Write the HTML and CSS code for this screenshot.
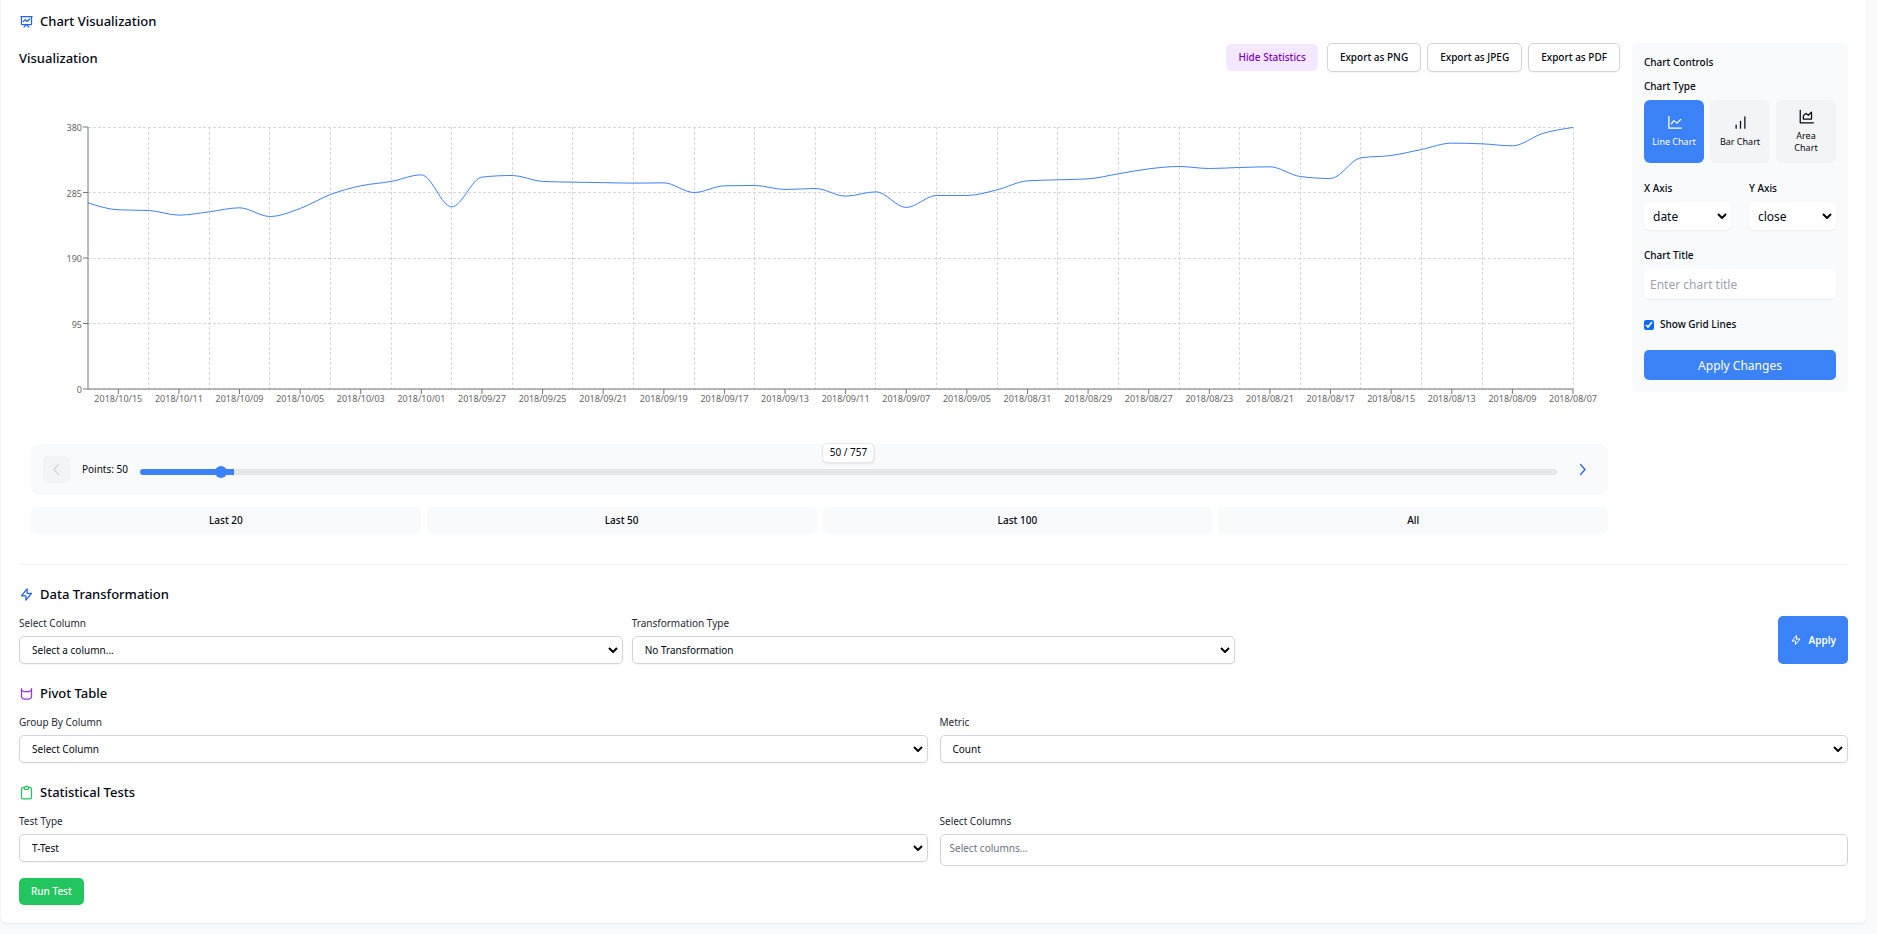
FILE: index.html
```html
<!DOCTYPE html>
<html lang="en">
<head>
<meta charset="utf-8">
<title>Chart Visualization</title>
<link rel="stylesheet" href="styles.css">
</head>
<body>
<main class="card">
  <h2 class="section-title">
    <svg class="icon icon-blue" viewBox="0 0 24 24"><path d="M7 12l3-3 3 3 4-4M8 21l4-4 4 4M3 4h18M4 4h16v12a1 1 0 01-1 1H5a1 1 0 01-1-1V4z"/></svg>
    Chart Visualization
  </h2>

  <div class="workspace">
    <section class="visual">
      <header class="visual-head">
        <h3 class="visual-title">Visualization</h3>
        <div class="actions">
          <button class="btn btn-stats" type="button">Hide Statistics</button>
          <button class="btn btn-outline" type="button">Export as PNG</button>
          <button class="btn btn-outline" type="button">Export as JPEG</button>
          <button class="btn btn-outline" type="button">Export as PDF</button>
        </div>
      </header>
      <div class="chart-box">
        <svg class="chart" id="chart" role="img" aria-label="Close by date"></svg>
        <div class="range-bar">
          <button class="nav-btn nav-off" type="button" aria-label="Previous" disabled><svg class="chevron" viewBox="0 0 24 24"><path d="M15 20l-7-8 7-8"/></svg></button>
          <label class="points" for="points">Points: 50</label>
          <div class="slider-wrap">
            <input class="slider" id="points" type="range" min="10" max="757" value="50">
            <span class="badge">50 / 757</span>
          </div>
          <button class="nav-btn" type="button" aria-label="Next"><svg class="chevron" viewBox="0 0 24 24"><path d="M9 4l7 8-7 8"/></svg></button>
        </div>
        <div class="presets">
          <button class="preset" type="button">Last 20</button>
          <button class="preset" type="button">Last 50</button>
          <button class="preset" type="button">Last 100</button>
          <button class="preset" type="button">All</button>
        </div>
      </div>
    </section>

    <aside class="controls">
      <h4 class="controls-title">Chart Controls</h4>
      <div class="controls-label">Chart Type</div>
      <div class="types">
        <button class="type type-on" type="button"><svg class="type-icon" viewBox="0 0 24 24"><path d="M3 2v19h20M7 14l4-5 5 4 6-6"/></svg>Line Chart</button>
        <button class="type" type="button"><svg class="type-icon" viewBox="0 0 24 24"><path d="M5 21v-5M12 21v-11M19 21V3"/></svg>Bar Chart</button>
        <button class="type" type="button"><svg class="type-icon" viewBox="0 0 24 24"><path d="M2 2v20h21M7 16v-5l4-4 4 3 5-5v11z"/></svg>Area Chart</button>
      </div>
      <div class="axes">
        <div class="control-field">
          <label class="controls-label" for="x-axis">X Axis</label>
          <select class="plain plain-select" id="x-axis"><option>date</option></select>
        </div>
        <div class="control-field">
          <label class="controls-label" for="y-axis">Y Axis</label>
          <select class="plain plain-select" id="y-axis"><option>close</option></select>
        </div>
      </div>
      <div class="control-field control-title">
        <label class="controls-label" for="chart-title">Chart Title</label>
        <input class="plain plain-text" id="chart-title" type="text" placeholder="Enter chart title">
      </div>
      <label class="check"><input class="check-box" type="checkbox" checked>Show Grid Lines</label>
      <button class="apply-wide" type="button">Apply Changes</button>
    </aside>
  </div>

  <hr class="divider">

  <section class="section">
    <h2 class="section-title">
      <svg class="icon icon-blue" viewBox="0 0 24 24"><path d="M13 10V3L4 14h7v7l9-11h-7z"/></svg>
      Data Transformation
    </h2>
    <div class="grid grid-3">
      <div class="field">
        <label class="label" for="column">Select Column</label>
        <select class="select" id="column"><option>Select a column...</option></select>
      </div>
      <div class="field">
        <label class="label" for="transform">Transformation Type</label>
        <select class="select" id="transform"><option>No Transformation</option></select>
      </div>
      <button class="apply" type="button"><svg class="apply-icon" viewBox="0 0 24 24"><path d="M13 10V3L4 14h7v7l9-11h-7z"/></svg>Apply</button>
    </div>
  </section>

  <section class="section">
    <h2 class="section-title">
      <svg class="icon icon-purple" viewBox="0 0 24 24"><path d="M4 4v13c0 2 3 4 8 4s8-2 8-4V4M4 5c0 2 3 4 8 4s8-2 8-4"/></svg>
      Pivot Table
    </h2>
    <div class="grid grid-2">
      <div class="field">
        <label class="label" for="group-by">Group By Column</label>
        <select class="select" id="group-by"><option>Select Column</option></select>
      </div>
      <div class="field">
        <label class="label" for="metric">Metric</label>
        <select class="select" id="metric"><option>Count</option></select>
      </div>
    </div>
  </section>

  <section class="section">
    <h2 class="section-title">
      <svg class="icon icon-green" viewBox="0 0 24 24"><path d="M9 4H6a2 2 0 00-2 2v14a2 2 0 002 2h12a2 2 0 002-2V6a2 2 0 00-2-2h-3M9 4a2 2 0 002 3h2a2 2 0 002-3M9 4a2 2 0 012-2h2a2 2 0 012 2"/></svg>
      Statistical Tests
    </h2>
    <div class="grid grid-2">
      <div class="field">
        <label class="label" for="test-type">Test Type</label>
        <select class="select" id="test-type"><option>T-Test</option></select>
      </div>
      <div class="field">
        <label class="label" for="columns">Select Columns</label>
        <input class="text-input" id="columns" type="text" placeholder="Select columns...">
      </div>
    </div>
    <button class="run" type="button">Run Test</button>
  </section>
</main>
<script src="chart.js"></script>
</body>
</html>
```
FILE: styles.css
```css
*, *::before, *::after { box-sizing: border-box; }
body {
  margin: 0;
  padding: 0 11px 11px 1px;
  background: #f9fafb;
  color: #030712;
  font-family: "Noto Sans", "Open Sans", sans-serif;
  font-size: 10px;
  line-height: 15px;
}
h2, h3, h4 { margin: 0; font-weight: 500; }
button, select, input { margin: 0; font: inherit; color: inherit; }
button { border: 0; cursor: pointer; }
.card {
  padding: 11px 18px 18px;
  background: #fff;
  border-radius: 0 0 6px 6px;
  box-shadow: 0 1px 2px rgba(0, 0, 0, 0.08);
}
.section-title {
  display: flex;
  align-items: center;
  gap: 6px;
  margin-bottom: 12px;
  font-size: 13px;
  line-height: 20px;
}
.icon, .chevron, .apply-icon, .type-icon {
  fill: none;
  stroke: currentColor;
  stroke-width: 2;
  stroke-linecap: round;
  stroke-linejoin: round;
}
.icon { width: 15px; height: 15px; }
.icon-blue { color: #2563eb; }
.icon-purple { color: #9333ea; }
.icon-green { color: #22c55e; }

.workspace { display: flex; align-items: flex-start; gap: 12px; }
.visual { flex: 1; min-width: 0; }
.visual-head { display: flex; align-items: center; justify-content: space-between; }
.visual-title { font-size: 13px; line-height: 20px; }
.actions { display: flex; align-items: center; gap: 6px; }
.btn { padding: 6px 12px; border-radius: 5px; font-weight: 500; }
.btn-stats { margin-right: 3px; background: #f3e8ff; color: #7e00c4; }
.btn-outline {
  border: 1px solid #d1d5db;
  background: #fff;
  box-shadow: 0 1px 2px rgba(0, 0, 0, 0.05);
}
.chart-box { padding: 24px 12px 30px; }
.chart { display: block; width: 100%; height: 336px; margin-bottom: 12px; overflow: visible; }
.tick-text { fill: #666; font-size: 9px; }
.grid-line { stroke: #d8d8d8; stroke-dasharray: 3 2; shape-rendering: crispEdges; }
.axis-line { stroke: #777; }
.series { fill: none; stroke: #3b82f6; stroke-width: 1; }

.range-bar {
  display: flex;
  align-items: center;
  gap: 12px;
  padding: 12px;
  border-radius: 8px;
  background: #f9fafb;
}
.nav-btn {
  display: grid;
  place-items: center;
  width: 27px;
  height: 27px;
  padding: 0;
  border-radius: 5px;
  background: transparent;
  color: #2563eb;
}
.nav-off { background: #f3f4f6; color: #d1d5db; }
.chevron { width: 15px; height: 15px; }
.points { white-space: nowrap; }
.slider-wrap { position: relative; flex: 1; display: flex; padding-top: 5px; }
.slider {
  width: 100%;
  height: 6px;
  border-radius: 4px;
  appearance: none;
  background: linear-gradient(to right, #3b82f6 0 6.6%, #e5e7eb 6.6%);
}
.slider::-webkit-slider-thumb {
  width: 12px;
  height: 12px;
  border-radius: 50%;
  appearance: none;
  background: #3b82f6;
}
.badge {
  position: absolute;
  left: 50%;
  bottom: 12px;
  transform: translateX(-50%);
  padding: 1px 6px 2px;
  border: 1px solid #e5e7eb;
  border-radius: 5px;
  background: #fff;
  box-shadow: 0 1px 2px rgba(0, 0, 0, 0.08);
  white-space: nowrap;
}
.presets { display: grid; grid-template-columns: repeat(4, 1fr); gap: 6px; margin-top: 12px; }
.preset { padding: 6px; border-radius: 5px; background: #f9fafb; font-weight: 500; }

.controls { width: 216px; padding: 12px; border-radius: 6px; background: #f9fafb; }
.controls-title { margin-bottom: 9px; line-height: 15px; }
.controls-label { display: block; margin-bottom: 6px; font-weight: 500; }
.types { display: grid; grid-template-columns: repeat(3, 1fr); gap: 6px; }
.type {
  display: flex;
  flex-direction: column;
  align-items: center;
  justify-content: center;
  gap: 6px;
  height: 63px;
  padding: 0 8px;
  border-radius: 6px;
  background: #f3f4f6;
  font-size: 9px;
  line-height: 12px;
}
.type-on { background: #3b82f6; color: #fff; }
.type-icon { width: 15px; height: 15px; }
.axes { display: grid; grid-template-columns: 1fr 1fr; gap: 18px; margin-top: 18px; }
.control-field { min-width: 0; }
.control-title { margin-top: 18px; }
.plain {
  display: block;
  width: 100%;
  height: 28px;
  padding: 0 9px;
  border: 0;
  border-radius: 5px;
  background-color: #fff;
  box-shadow: 0 1px 2px rgba(0, 0, 0, 0.06);
  font-size: 12px;
}
.plain-text { height: 30px; padding: 0 6px; }
.plain::placeholder { color: #9ca3af; }
.check { display: flex; align-items: center; gap: 6px; margin-top: 18px; font-weight: 500; }
.check-box { width: 10px; height: 10px; accent-color: #0b6bf2; }
.apply-wide {
  width: 100%;
  height: 30px;
  margin-top: 18px;
  border-radius: 5px;
  background: #3b82f6;
  color: #fff;
  font-size: 12px;
}

.divider { margin: 0 0 19px; border: 0; border-top: 1px solid #f3f4f6; }
.section + .section { margin-top: 19px; }
.grid { display: grid; }
.grid-3 { grid-template-columns: repeat(3, 1fr); gap: 9px; }
.grid-2 { grid-template-columns: repeat(2, 1fr); gap: 12px; }
.label { display: block; margin-bottom: 5px; color: #1f2937; }
.select, .text-input {
  display: block;
  width: 100%;
  height: 28px;
  padding: 0 12px;
  border: 1px solid #d1d5db;
  border-radius: 5px;
  background-color: #fff;
  box-shadow: 0 1px 2px rgba(0, 0, 0, 0.05);
}
.select, .plain-select {
  appearance: none;
  background-image: url("data:image/svg+xml,%3Csvg xmlns='http://www.w3.org/2000/svg' viewBox='0 0 10 6'%3E%3Cpath d='M1 1l4 4 4-4' fill='none' stroke='%23000' stroke-width='2'/%3E%3C/svg%3E");
  background-repeat: no-repeat;
  background-position: right 4px center;
  background-size: 10px 6px;
}
.text-input { height: 32px; padding: 0 9px 4px; box-shadow: none; }
.text-input::placeholder { color: #6b7280; }
.apply {
  display: flex;
  align-items: center;
  justify-self: end;
  gap: 6px;
  padding: 0 12px;
  border-radius: 5px;
  background: #3b82f6;
  color: #fff;
  font-weight: 600;
}
.apply-icon { width: 12px; height: 12px; }
.run {
  margin-top: 12px;
  padding: 6px 12px;
  border-radius: 5px;
  background: #22c55e;
  color: #fff;
  font-weight: 500;
}
```
FILE: chart.js
```js
const values = [
  270, 259.9, 258.9, 252.2, 257, 262.8, 250.2, 261.8, 282.1, 294.7,
  301, 310.6, 264.2, 307.3, 309.7, 301, 300, 299.3, 298.6, 299,
  285, 294.7, 295.2, 289.4, 290.8, 279.7, 286, 263.3, 280.7, 280.7,
  288.9, 301.9, 303.4, 304.8, 312.1, 319.3, 322.7, 319.8, 321.3, 322.2,
  308.2, 305.3, 335.3, 338.7, 347.4, 356.6, 355.6, 352.7, 370.6, 379.3
];
const dates = [
  "10/15", "10/11", "10/09", "10/05", "10/03", "10/01", "09/27", "09/25", "09/21",
  "09/19", "09/17", "09/13", "09/11", "09/07", "09/05", "08/31", "08/29", "08/27",
  "08/23", "08/21", "08/17", "08/15", "08/13", "08/09", "08/07"
];
const margin = { left: 57, right: 35, top: 31, bottom: 293 };
const svg = document.getElementById("chart");

function add(name, attrs, text) {
  const node = document.createElementNS("http://www.w3.org/2000/svg", name);
  for (const key in attrs) node.setAttribute(key, attrs[key]);
  if (text) node.textContent = text;
  svg.appendChild(node);
}
function line(x1, y1, x2, y2, cls) {
  add("line", { x1, y1, x2, y2, class: cls });
}

// Monotone cubic interpolation through evenly spaced points.
function monotonePath(pts, step) {
  const slopes = pts.slice(1).map((p, i) => (p[1] - pts[i][1]) / step);
  const last = slopes.length;
  const tangents = pts.map((p, i) => {
    if (i === 0 || i === last) return 0;
    const a = slopes[i - 1];
    const b = slopes[i];
    const sign = Math.sign(a) + Math.sign(b);
    return sign * Math.min(Math.abs(a), Math.abs(b), Math.abs(a + b) / 4) || 0;
  });
  tangents[0] = (3 * slopes[0] - tangents[1]) / 2;
  tangents[last] = (3 * slopes[last - 1] - tangents[last - 1]) / 2;
  const third = step / 3;
  let d = `M${pts[0][0]},${pts[0][1]}`;
  for (let i = 1; i < pts.length; i++) {
    const [x0, y0] = pts[i - 1];
    const [x1, y1] = pts[i];
    d += `C${x0 + third},${y0 + third * tangents[i - 1]},${x1 - third},${y1 - third * tangents[i]},${x1},${y1}`;
  }
  return d;
}

function draw() {
  svg.replaceChildren();
  const right = svg.clientWidth - margin.right;
  const step = (right - margin.left) / (values.length - 1);
  const x = i => margin.left + step * i;
  const y = v => margin.bottom - (margin.bottom - margin.top) * v / 380;

  for (const v of [0, 95, 190, 285, 380]) {
    line(margin.left, y(v), right, y(v), "grid-line");
    line(margin.left - 5, y(v), margin.left, y(v), "axis-line");
    add("text", { x: margin.left - 6, y: y(v) + 4, "text-anchor": "end", class: "tick-text" }, String(v));
  }
  for (let i = 2; i < 48; i += 2) line(x(i), margin.top, x(i), margin.bottom, "grid-line");
  line(right, margin.top, right, margin.bottom, "grid-line");
  line(margin.left, margin.top, margin.left, margin.bottom, "axis-line");
  line(margin.left, margin.bottom, right, margin.bottom, "axis-line");
  dates.forEach((date, n) => {
    const tx = x(2 * n + 1);
    line(tx, margin.bottom, tx, margin.bottom + 5, "axis-line");
    add("text", { x: tx, y: margin.bottom + 13, "text-anchor": "middle", class: "tick-text" }, "2018/" + date);
  });
  add("path", { d: monotonePath(values.map((v, i) => [x(i), y(v)]), step), class: "series" });
}

draw();
window.addEventListener("resize", draw);
```
